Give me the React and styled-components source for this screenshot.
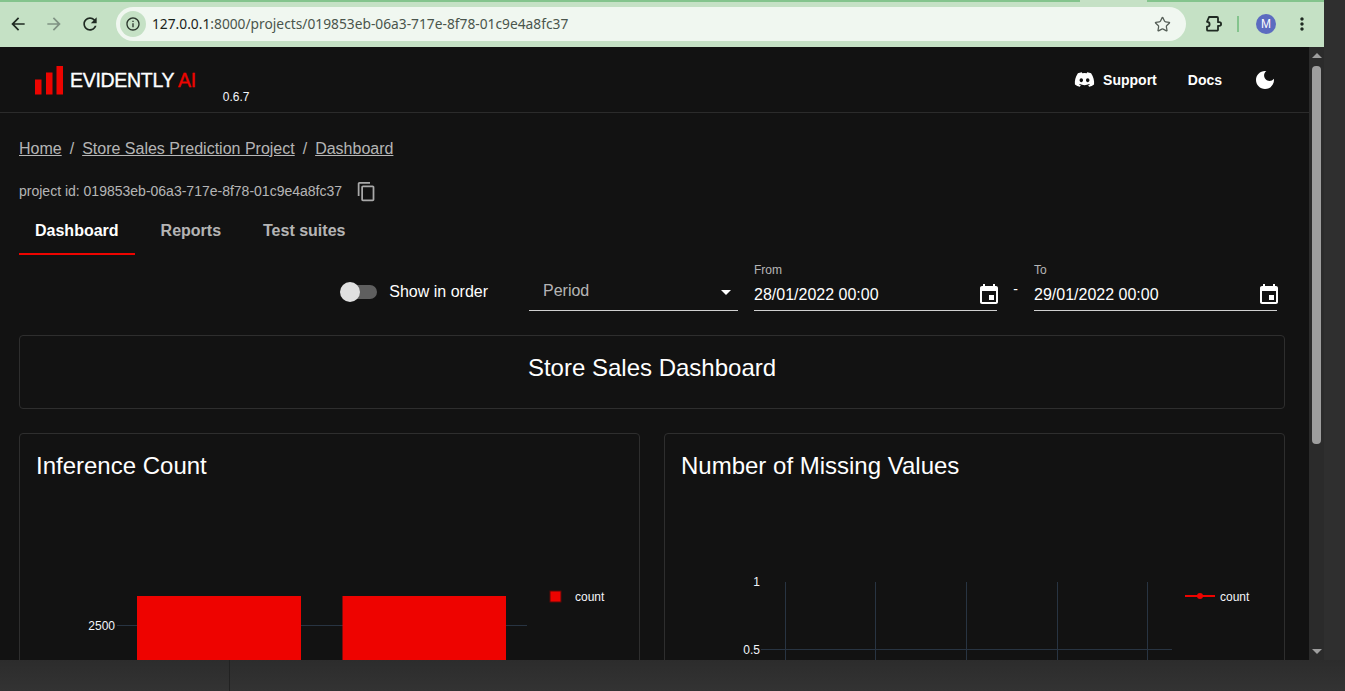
import styled, { createGlobalStyle } from "styled-components";
import { FaDiscord } from "react-icons/fa";
import { Star } from "lucide-react";

const GlobalStyle = createGlobalStyle`
  html, body {
    margin: 0;
    padding: 0;
    background: #2f2f2f;
    overflow: hidden;
  }
  * {
    box-sizing: border-box;
  }
`;

const tabs = [
  { label: "Dashboard", active: true },
  { label: "Reports" },
  { label: "Test suites" },
];

const barGridColor = "#283442";

function Icon({ size = 24, color = "currentColor", d }) {
  return (
    <svg width={size} height={size} viewBox="0 0 24 24" fill={color}>
      <path d={d} />
    </svg>
  );
}

const paths = {
  back: "M20 11H7.83l5.59-5.59L12 4l-8 8 8 8 1.41-1.41L7.83 13H20v-2z",
  forward: "M12 4l-1.41 1.41L16.17 11H4v2h12.17l-5.58 5.59L12 20l8-8z",
  reload: "M17.65 6.35C16.2 4.9 14.21 4 12 4c-4.42 0-7.99 3.58-7.99 8s3.57 8 7.99 8c3.73 0 6.84-2.55 7.73-6h-2.08c-.82 2.33-3.04 4-5.65 4-3.31 0-6-2.69-6-6s2.69-6 6-6c1.66 0 3.14.69 4.22 1.78L13 11h7V4l-2.35 2.35z",
  info: "M11 7h2v2h-2zm0 4h2v6h-2zm1-9C6.48 2 2 6.48 2 12s4.48 10 10 10 10-4.48 10-10S17.52 2 12 2zm0 18c-4.41 0-8-3.59-8-8s3.59-8 8-8 8 3.59 8 8-3.59 8-8 8z",
  more: "M12 8c1.1 0 2-.9 2-2s-.9-2-2-2-2 .9-2 2 .9 2 2 2zm0 2c-1.1 0-2 .9-2 2s.9 2 2 2 2-.9 2-2-.9-2-2-2zm0 6c-1.1 0-2 .9-2 2s.9 2 2 2 2-.9 2-2-.9-2-2-2z",
  moon: "M12 3c-4.97 0-9 4.03-9 9s4.03 9 9 9 9-4.03 9-9c0-.46-.04-.92-.1-1.36-.98 1.37-2.58 2.26-4.4 2.26-2.98 0-5.4-2.42-5.4-5.4 0-1.81.89-3.42 2.26-4.4-.44-.06-.9-.1-1.36-.1z",
  copy: "M16 1H4c-1.1 0-2 .9-2 2v14h2V3h12V1zm3 4H8c-1.1 0-2 .9-2 2v14c0 1.1.9 2 2 2h11c1.1 0 2-.9 2-2V7c0-1.1-.9-2-2-2zm0 16H8V7h11v14z",
  event: "M17 12h-5v5h5v-5zM16 1v2H8V1H6v2H5c-1.11 0-1.99.9-1.99 2L3 19c0 1.1.89 2 2 2h14c1.1 0 2-.9 2-2V5c0-1.1-.9-2-2-2h-1V1h-2zm3 18H5V8h14v11z",
  drop: "M7 10l5 5 5-5z",
};

function DateField({ label, value }) {
  return (
    <DateBox>
      <FieldLabel>{label}</FieldLabel>
      <DateInput>
        <span>{value}</span>
        <Icon d={paths.event} color="#fff" />
      </DateInput>
    </DateBox>
  );
}

function App() {
  return (
    <>
      <GlobalStyle />
      <Screen>
        <Browser>
          <TabStrip>
            <TabEdge $width={1080} />
            <TabGap />
            <TabEdge $width={177} />
          </TabStrip>
          <Toolbar>
            <NavButton><Icon size={20} color="#1f2a22" d={paths.back} /></NavButton>
            <NavButton><Icon size={20} color="#7f9283" d={paths.forward} /></NavButton>
            <NavButton><Icon size={20} color="#1f2a22" d={paths.reload} /></NavButton>
            <Omnibox>
              <InfoChip><Icon size={16} color="#2a352c" d={paths.info} /></InfoChip>
              <Url><b>127.0.0.1</b>:8000/projects/019853eb-06a3-717e-8f78-01c9e4a8fc37</Url>
              <Star size={17} color="#565f58" strokeWidth={1.8} />
            </Omnibox>
            <ExtensionButton>
              <svg width="20" height="20" viewBox="0 0 20 20" fill="none" stroke="#1f2a22" strokeWidth="1.8" strokeLinejoin="round">
                <path d="M5 3H13a1 1 0 0 1 1 1V8.2h1.3a1.8 1.8 0 0 1 0 3.6H14V15.7a1 1 0 0 1-1 1H4a1 1 0 0 1-1-1V12.6c1.6 0 2.6-1 2.6-2.4S4.6 7.8 3 7.8z" />
              </svg>
            </ExtensionButton>
            <ToolbarDivider />
            <Avatar>M</Avatar>
            <MenuButton><Icon size={20} color="#1f2a22" d={paths.more} /></MenuButton>
          </Toolbar>
          <Body>
            <Page>
              <Header>
                <LogoMark width="28" height="29" viewBox="0 0 28 29">
                  <rect x="0" y="13.5" width="6.5" height="15" fill="#ed0400" />
                  <rect x="11" y="6.5" width="6.5" height="22" fill="#ed0400" />
                  <rect x="21.5" y="0" width="6.5" height="28.5" fill="#ed0400" />
                </LogoMark>
                <Wordmark>EVIDENTLY <em>AI</em></Wordmark>
                <Version>0.6.7</Version>
                <HeaderLinks>
                  <HeaderLink>
                    <FaDiscord size={21} color="#fff" />
                    Support
                  </HeaderLink>
                  <HeaderLink>Docs</HeaderLink>
                  <MoonButton><Icon color="#fff" d={paths.moon} /></MoonButton>
                </HeaderLinks>
              </Header>
              <Content>
                <Breadcrumbs>
                  <Crumb>Home</Crumb>
                  <CrumbSep>/</CrumbSep>
                  <Crumb>Store Sales Prediction Project</Crumb>
                  <CrumbSep>/</CrumbSep>
                  <Crumb>Dashboard</Crumb>
                </Breadcrumbs>
                <ProjectRow>
                  <ProjectId>project id: 019853eb-06a3-717e-8f78-01c9e4a8fc37</ProjectId>
                  <Icon size={21} color="#a9a9a9" d={paths.copy} />
                </ProjectRow>
                <Tabs>
                  {tabs.map((t) => (
                    <Tab key={t.label} $active={t.active}>{t.label}</Tab>
                  ))}
                </Tabs>
                <Filters>
                  <Toggle>
                    <SwitchTrack><SwitchThumb /></SwitchTrack>
                    Show in order
                  </Toggle>
                  <PeriodSelect>
                    <PeriodText>Period</PeriodText>
                    <Icon color="#fff" d={paths.drop} />
                  </PeriodSelect>
                  <DateField label="From" value="28/01/2022 00:00" />
                  <DateDash>-</DateDash>
                  <DateField label="To" value="29/01/2022 00:00" />
                </Filters>
                <TitleCard>Store Sales Dashboard</TitleCard>
                <ChartGrid>
                  <ChartCard>
                    <ChartTitle>Inference Count</ChartTitle>
                    {/* plot coordinates start at the card's content box */}
                    <svg width="587" height="300" viewBox="0 0 587 300" fontFamily="Liberation Sans, Arial, sans-serif">
                      <line x1="81" x2="491" y1="143.5" y2="143.5" stroke={barGridColor} />
                      <rect x="101" y="114" width="164" height="186" fill="#ee0300" />
                      <rect x="306.5" y="114" width="163.5" height="186" fill="#ee0300" />
                      <text x="79" y="148" textAnchor="end" fontSize="12" fill="#f2f5fa">2500</text>
                      <rect x="514" y="109" width="11" height="11" fill="#ee0300" stroke="#5a0a08" />
                      <text x="539" y="119" fontSize="12" fill="#f2f5fa">count</text>
                    </svg>
                  </ChartCard>
                  <ChartCard>
                    <ChartTitle>Number of Missing Values</ChartTitle>
                    <svg width="587" height="300" viewBox="0 0 587 300" fontFamily="Liberation Sans, Arial, sans-serif">
                      {[104.5, 194.5, 285.5, 376.5, 466.5].map((x) => (
                        <line key={x} x1={x} x2={x} y1="100" y2="300" stroke={barGridColor} />
                      ))}
                      <line x1="80" x2="491" y1="167.5" y2="167.5" stroke={barGridColor} />
                      <text x="79" y="104" textAnchor="end" fontSize="12" fill="#f2f5fa">1</text>
                      <text x="79" y="172" textAnchor="end" fontSize="12" fill="#f2f5fa">0.5</text>
                      <line x1="504" x2="534" y1="114" y2="114" stroke="#ee0300" strokeWidth="2" />
                      <circle cx="519" cy="114" r="3" fill="#ee0300" />
                      <text x="539" y="119" fontSize="12" fill="#f2f5fa">count</text>
                    </svg>
                  </ChartCard>
                </ChartGrid>
              </Content>
            </Page>
            <Scrollbar>
              <ArrowUp />
              <ScrollThumb />
              <ArrowDown />
            </Scrollbar>
          </Body>
        </Browser>
        <Taskbar>
          <TaskbarDivider />
        </Taskbar>
      </Screen>
    </>
  );
}

const Screen = styled.div`
  width: 1345px;
  height: 691px;
  background: #2f2f2f;
  display: flex;
  flex-direction: column;
  overflow: hidden;
  font-family: "Liberation Sans", Arial, sans-serif;
`;

const Browser = styled.div`
  width: 1324px;
  height: 660px;
  flex: none;
  display: flex;
  flex-direction: column;
  background: #121212;
`;

const TabStrip = styled.div`
  height: 2px;
  display: flex;
  background: #c5e1c5;
`;

const TabEdge = styled.div`
  width: ${(p) => p.$width}px;
  background: #84c48d;
`;

const TabGap = styled.div`
  width: 67px;
`;

const Toolbar = styled.div`
  height: 45px;
  background: #c5e1c5;
  display: flex;
  align-items: center;
  gap: 1px;
  padding-bottom: 1px;
`;

const NavButton = styled.div`
  width: 35px;
  height: 35px;
  display: flex;
  align-items: center;
  justify-content: center;
`;

const Omnibox = styled.div`
  width: 1070px;
  height: 34px;
  margin-left: 8px;
  border-radius: 17px;
  background: #f0f7f0;
  display: flex;
  align-items: center;
  padding: 0 15px 0 4px;
`;

const InfoChip = styled.div`
  width: 26px;
  height: 26px;
  border-radius: 50%;
  background: #c5e1c5;
  display: flex;
  align-items: center;
  justify-content: center;
`;

const Url = styled.div`
  flex: 1;
  margin: -2px 0 0 6px;
  font-size: 13.77px;
  color: #4a554c;
  font-family: "Noto Sans", "Liberation Sans", sans-serif;

  b {
    font-weight: 400;
    color: #1a231c;
  }
`;

const ExtensionButton = styled(NavButton)`
  margin-left: 9px;
`;

const ToolbarDivider = styled.div`
  width: 2px;
  height: 16px;
  margin-left: 5px;
  background: #84c48d;
`;

const Avatar = styled.div`
  width: 20px;
  height: 20px;
  margin-left: 16px;
  border-radius: 50%;
  background: #5c6bc0;
  color: #fff;
  font-size: 12px;
  display: flex;
  align-items: center;
  justify-content: center;
`;

const MenuButton = styled(NavButton)`
  margin-left: 7px;
`;

const Body = styled.div`
  flex: 1;
  min-height: 0;
  display: flex;
`;

const Page = styled.div`
  flex: 1;
  min-width: 0;
  overflow: hidden;
  background: #121212;
  color: #fff;
`;

const Header = styled.header`
  height: 66px;
  display: flex;
  align-items: center;
  padding: 0 32px 0 35px;
  border-bottom: 1px solid #2b2b2b;
`;

const LogoMark = styled.svg`
  flex: none;
  margin-top: 1px;
`;

const Wordmark = styled.div`
  margin-left: 7px;
  margin-top: 2px;
  font-size: 19.5px;
  letter-spacing: -0.3px;
  -webkit-text-stroke: 0.35px currentColor;
  color: #fff;
  white-space: nowrap;

  em {
    font-style: normal;
    color: #ed0400;
  }
`;

const Version = styled.div`
  align-self: flex-end;
  margin-left: 27px;
  margin-bottom: 8px;
  font-size: 12px;
  color: #f2f5fa;
`;

const HeaderLinks = styled.nav`
  margin-left: auto;
  display: flex;
  align-items: center;
`;

const HeaderLink = styled.a`
  display: flex;
  align-items: center;
  gap: 8px;
  margin-right: 31px;
  font-size: 14px;
  font-weight: 700;
  color: #fff;
`;

const MoonButton = styled.div`
  display: flex;
`;

const Content = styled.main`
  padding: 24px 24px 0 19px;
`;

const Breadcrumbs = styled.div`
  display: flex;
  height: 24px;
  align-items: center;
  font-size: 16px;
  color: rgba(255, 255, 255, 0.7);
`;

const Crumb = styled.a`
  text-decoration: underline;
`;

const CrumbSep = styled.span`
  margin: 0 8px;
`;

const ProjectRow = styled.div`
  display: flex;
  align-items: center;
  height: 24px;
  margin-top: 18px;
  gap: 14px;
`;

const ProjectId = styled.span`
  font-size: 14px;
  color: rgba(255, 255, 255, 0.7);
`;

const Tabs = styled.div`
  display: flex;
  gap: 10px;
  margin-top: 3px;
  height: 49px;
`;

const Tab = styled.div`
  padding: 2px 16px 0;
  display: flex;
  align-items: center;
  font-size: 16px;
  font-weight: 700;
  color: ${(p) => (p.$active ? "#fff" : "rgba(255, 255, 255, 0.7)")};
  border-bottom: 2px solid ${(p) => (p.$active ? "#ed0400" : "transparent")};
`;

const Filters = styled.div`
  display: flex;
  justify-content: flex-end;
  align-items: flex-end;
  height: 49px;
  margin-top: 7px;
  padding-right: 8px;
`;

const Toggle = styled.label`
  display: flex;
  align-items: center;
  gap: 12px;
  height: 38px;
  margin-right: 41px;
  font-size: 16px;
  color: #fff;
`;

const SwitchTrack = styled.span`
  width: 36px;
  height: 14px;
  border-radius: 7px;
  background: #5f5f5f;
  display: flex;
  align-items: center;
`;

const SwitchThumb = styled.span`
  width: 20px;
  height: 20px;
  margin-left: -1px;
  border-radius: 50%;
  background: #e0e0e0;
`;

const PeriodSelect = styled.div`
  width: 209px;
  height: 38px;
  display: flex;
  align-items: center;
  justify-content: space-between;
  padding: 0 0 0 14px;
  border-bottom: 1px solid #d0d0d0;
  margin-right: 16px;
`;

const PeriodText = styled.span`
  font-size: 16px;
  margin-top: -2px;
  color: rgba(255, 255, 255, 0.7);
`;

const DateBox = styled.div`
  width: 243px;
`;

const FieldLabel = styled.div`
  font-size: 12px;
  line-height: 14px;
  margin-bottom: 4px;
  color: rgba(255, 255, 255, 0.7);
`;

const DateInput = styled.div`
  height: 30px;
  padding-bottom: 2px;
  display: flex;
  align-items: center;
  justify-content: space-between;
  font-size: 16px;
  color: #fff;
  border-bottom: 1px solid #d0d0d0;

  svg {
    margin-right: -4px;
  }
`;

const DateDash = styled.div`
  width: 37px;
  text-align: center;
  align-self: flex-end;
  margin-bottom: 14px;
  font-size: 14px;
  color: #fff;
`;

const TitleCard = styled.section`
  height: 74px;
  margin-top: 24px;
  padding-bottom: 8px;
  border: 1px solid #2e2e2e;
  border-radius: 4px;
  display: flex;
  align-items: center;
  justify-content: center;
  font-size: 24px;
`;

const ChartGrid = styled.div`
  display: grid;
  grid-template-columns: 1fr 1fr;
  gap: 24px;
  margin-top: 24px;
`;

const ChartCard = styled.section`
  height: 420px;
  padding: 16px;
  border: 1px solid #2e2e2e;
  border-radius: 4px;
`;

const ChartTitle = styled.h5`
  margin: 0;
  height: 32px;
  line-height: 32px;
  font-size: 24px;
  font-weight: 400;
`;

const Scrollbar = styled.aside`
  width: 15px;
  flex: none;
  background: #2b2b2b;
  display: flex;
  flex-direction: column;
  align-items: center;
  padding: 6px 0 6px;
`;

const ArrowUp = styled.div`
  width: 0;
  height: 0;
  border-left: 5px solid transparent;
  border-right: 5px solid transparent;
  border-bottom: 5px solid #9e9e9e;
`;

const ArrowDown = styled.div`
  margin-top: auto;
  width: 0;
  height: 0;
  border-left: 5px solid transparent;
  border-right: 5px solid transparent;
  border-top: 5px solid #9e9e9e;
`;

const ScrollThumb = styled.div`
  width: 9px;
  height: 378px;
  margin-top: 8px;
  border-radius: 4px;
  background: #9e9e9e;
`;

const Taskbar = styled.footer`
  flex: 1;
  background: linear-gradient(#2c2c2c, #333);
  display: flex;
  padding-left: 229px;
`;

const TaskbarDivider = styled.div`
  width: 1px;
  background: #222;
`;

export default App;
